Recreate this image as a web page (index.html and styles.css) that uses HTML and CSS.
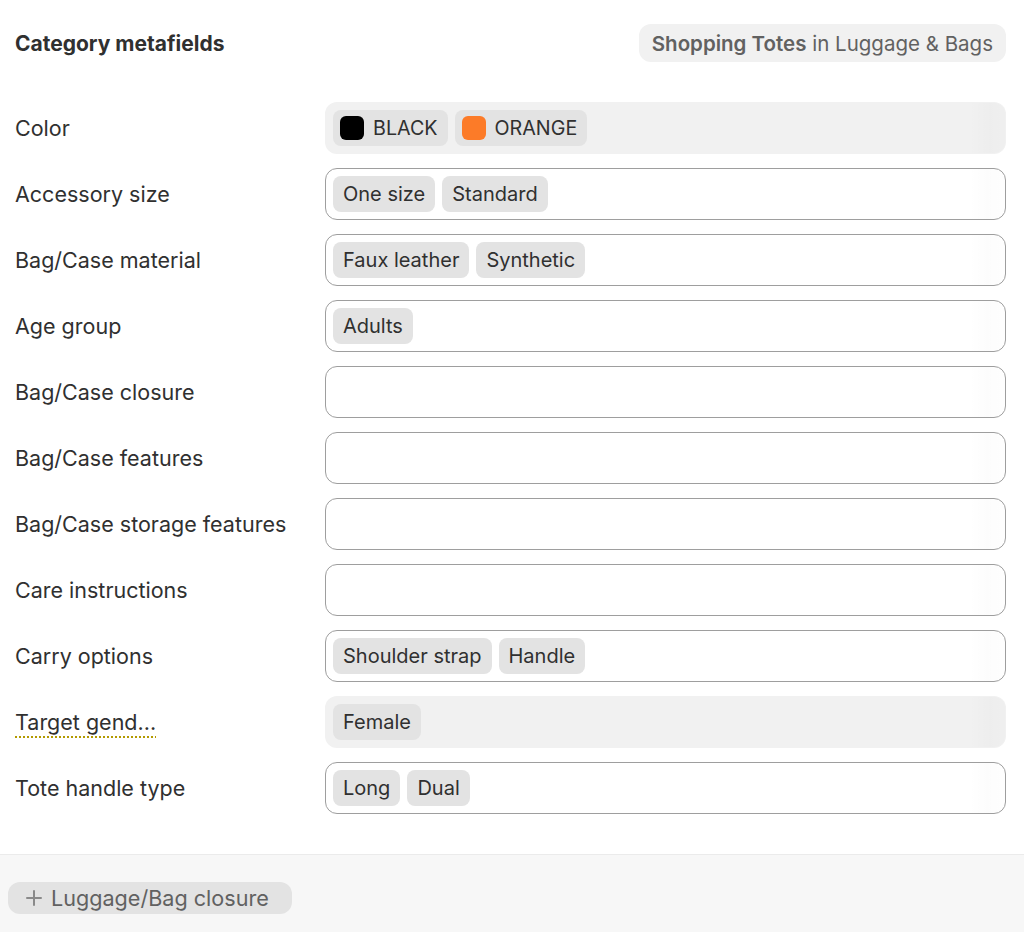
FILE: index.html
```html
<!DOCTYPE html>
<html lang="en">
<head>
<meta charset="utf-8">
<title>Category metafields</title>
<link rel="stylesheet" href="styles.css">
</head>
<body>
<div class="card">
  <div class="content">
    <div class="header">
      <h2 class="title">Category metafields</h2>
      <div class="category-chip"><span class="cat-strong">Shopping Totes</span>&nbsp;in Luggage &amp; Bags</div>
    </div>
    <div class="rows">
      <div class="row">
        <div class="label">Color</div>
        <div class="field field-filled">
          <span class="chip chip-color"><span class="swatch swatch-black"></span>BLACK</span>
          <span class="chip chip-color"><span class="swatch swatch-orange"></span>ORANGE</span>
        </div>
      </div>
      <div class="row">
        <div class="label">Accessory size</div>
        <div class="field">
          <span class="chip">One size</span>
          <span class="chip">Standard</span>
        </div>
      </div>
      <div class="row">
        <div class="label">Bag/Case material</div>
        <div class="field">
          <span class="chip">Faux leather</span>
          <span class="chip">Synthetic</span>
        </div>
      </div>
      <div class="row">
        <div class="label">Age group</div>
        <div class="field">
          <span class="chip">Adults</span>
        </div>
      </div>
      <div class="row">
        <div class="label">Bag/Case closure</div>
        <div class="field"></div>
      </div>
      <div class="row">
        <div class="label">Bag/Case features</div>
        <div class="field"></div>
      </div>
      <div class="row">
        <div class="label">Bag/Case storage features</div>
        <div class="field"></div>
      </div>
      <div class="row">
        <div class="label">Care instructions</div>
        <div class="field"></div>
      </div>
      <div class="row">
        <div class="label">Carry options</div>
        <div class="field">
          <span class="chip">Shoulder strap</span>
          <span class="chip">Handle</span>
        </div>
      </div>
      <div class="row">
        <div class="label"><span class="label-trunc">Target gend...</span></div>
        <div class="field field-filled">
          <span class="chip">Female</span>
        </div>
      </div>
      <div class="row">
        <div class="label">Tote handle type</div>
        <div class="field">
          <span class="chip">Long</span>
          <span class="chip">Dual</span>
        </div>
      </div>
    </div>
  </div>
  <div class="footer">
    <button class="add-btn" type="button">
      <svg class="plus" width="16" height="16" viewBox="0 0 16 16" aria-hidden="true"><path d="M8 1v14M1 8h14" stroke="#8a8a8a" stroke-width="2" stroke-linecap="round" fill="none"/></svg>
      <span>Luggage/Bag closure</span>
    </button>
  </div>
</div>
</body>
</html>
```
FILE: styles.css
```css
* { box-sizing: border-box; }
html, body {
  margin: 0;
  padding: 0;
  background: #ffffff;
  font-family: Inter, "Noto Sans", "Liberation Sans", sans-serif;
  color: #303030;
}
.card {
  width: 1024px;
  min-height: 932px;
  display: flex;
  flex-direction: column;
}
.content {
  padding: 24px 18px 40px 15px;
  border-bottom: 1px solid #ebebeb;
}
.header {
  display: flex;
  align-items: center;
  justify-content: space-between;
  height: 38px;
  margin-bottom: 40px;
}
.title {
  margin: 0;
  font-size: 21px;
  font-weight: 650;
  color: #303030;
}
.category-chip {
  height: 38px;
  display: flex;
  align-items: center;
  padding: 0 13px;
  background: #f1f1f1;
  border-radius: 12px;
  font-size: 20.5px;
  color: #616161;
  white-space: nowrap;
}
.cat-strong { font-weight: 600; }
.rows {
  display: flex;
  flex-direction: column;
  gap: 14px;
}
.row {
  display: flex;
  align-items: center;
  height: 52px;
}
.label {
  width: 310px;
  flex: none;
  font-size: 21.5px;
  font-weight: 400;
  color: #303030;
}
.label-trunc {
  text-decoration: underline dotted #b39a00;
  text-underline-offset: 6px;
  text-decoration-thickness: 1.5px;
}
.field {
  position: relative;
  flex: 1;
  height: 52px;
  border: 1px solid #9e9e9e;
  border-radius: 12px;
  background: #ffffff;
  display: flex;
  align-items: center;
  gap: 7px;
  padding: 0 7px;
  overflow: hidden;
}
.field::after {
  content: "";
  position: absolute;
  top: 0;
  right: 0;
  bottom: 0;
  width: 36px;
  background: linear-gradient(to right, rgba(0,0,0,0), rgba(0,0,0,0.01) 50%, rgba(0,0,0,0.005));
}
.field-filled {
  border-color: transparent;
  background: #f1f1f1;
}
.field-filled::after {
  background: linear-gradient(to right, rgba(0,0,0,0), rgba(0,0,0,0.015) 60%, rgba(0,0,0,0.008));
}
.chip {
  height: 36px;
  display: inline-flex;
  align-items: center;
  padding: 0 10px;
  background: #e3e3e3;
  border-radius: 8px;
  font-size: 20px;
  color: #303030;
  white-space: nowrap;
}
.chip-color {
  padding: 0 10px 0 7px;
  gap: 9px;
  font-size: 19.7px;
}
.swatch {
  width: 24px;
  height: 24px;
  border-radius: 6px;
  display: inline-block;
}
.swatch-black { background: #000000; }
.swatch-orange { background: #fc7b28; }
.footer {
  flex: 1;
  background: #f7f7f7;
  padding: 27px 8px;
}
.add-btn {
  height: 32px;
  display: inline-flex;
  align-items: center;
  gap: 9px;
  padding: 0 23px 0 18px;
  border: none;
  border-radius: 12px;
  background: #e3e3e3;
  font-family: inherit;
  font-size: 21.6px;
  color: #616161;
}
.plus { flex: none; }
```
